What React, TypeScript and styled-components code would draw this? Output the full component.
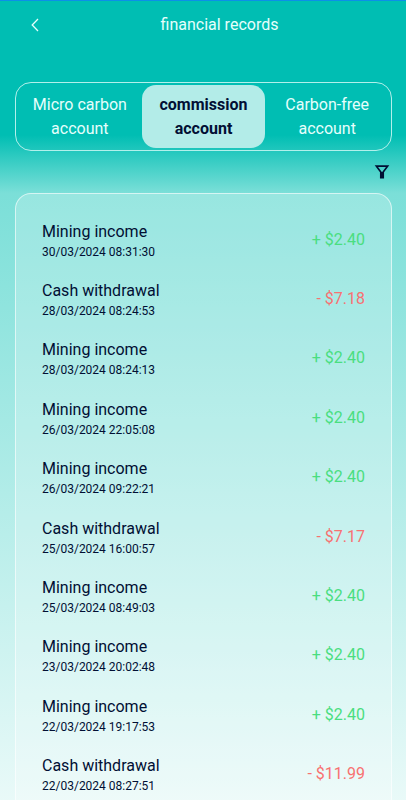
import React, { useState } from "react";
import styled, { createGlobalStyle } from "styled-components";

const GlobalStyle = createGlobalStyle`
  * { box-sizing: border-box; }
  body { margin: 0; font-family: Roboto, "Liberation Sans", sans-serif; color: #010f34; }
  button { font: inherit; color: inherit; background: none; border: 0; padding: 0; cursor: pointer; }
`;

const Page = styled.div`
  display: flex;
  flex-direction: column;
  height: 100vh;
  overflow-y: auto;
  scrollbar-width: none;
  padding: 0 14px 0 15px;
  border-top: 1px solid #0d8fe8;
  background: linear-gradient(180deg, #00beb3 0, #00beb3 134px, #7bdfd8 192px, #effbfa 832px);
`;

const Header = styled.header`
  display: flex;
  flex-shrink: 0;
  align-items: center;
  height: 48px;
  margin-bottom: 33px;
  color: #e6fffc;
`;

const BackButton = styled.button`
  display: flex;
  justify-content: flex-end;
  width: 28px;
`;

const Title = styled.h1`
  flex: 1;
  margin: 0;
  padding-left: 4px;
  font-size: 16px;
  font-weight: 400;
  line-height: 24px;
  text-align: center;
`;

const Tabs = styled.div`
  display: grid;
  flex-shrink: 0;
  grid-template-columns: repeat(3, 1fr);
  padding: 2px;
  border: 1px solid #b2f0eb;
  border-radius: 16px;
`;

const Tab = styled.button<{ $active: boolean }>`
  && {
    padding: 8px 4px 7px;
    border-radius: 14px;
    font-size: 16px;
    line-height: 24px;
    font-weight: ${(p) => (p.$active ? 700 : 400)};
    color: ${(p) => (p.$active ? "#010f34" : "#e6fffc")};
    background: ${(p) => (p.$active ? "#b3ece8" : "transparent")};
  }
`;

const Toolbar = styled.div`
  display: flex;
  flex-shrink: 0;
  align-items: center;
  justify-content: flex-end;
  height: 42px;
`;

const FilterButton = styled.button`
  display: flex;
`;

const Records = styled.ul`
  display: grid;
  flex-shrink: 0;
  grid-auto-rows: 1fr;
  min-height: 628px;
  margin: 0;
  padding: 16px 26px;
  list-style: none;
  border: 1px solid rgba(255, 255, 255, 0.6);
  border-radius: 16px;
  background: rgba(255, 255, 255, 0.22);
`;

const Row = styled.li`
  display: flex;
  align-items: center;
  justify-content: space-between;
`;

const Name = styled.div`
  font-size: 16px;
  line-height: 24px;
`;

const Time = styled.time`
  display: block;
  font-size: 12px;
  line-height: 16px;
`;

const Amount = styled.span<{ $positive: boolean }>`
  font-size: 16px;
  line-height: 24px;
  color: ${(p) => (p.$positive ? "#4ade80" : "#f87171")};
`;

const accounts = ["Micro carbon account", "commission account", "Carbon-free account"];

const records = [
  { time: "30/03/2024 08:31:30", amount: 2.4 },
  { time: "28/03/2024 08:24:53", amount: -7.18 },
  { time: "28/03/2024 08:24:13", amount: 2.4 },
  { time: "26/03/2024 22:05:08", amount: 2.4 },
  { time: "26/03/2024 09:22:21", amount: 2.4 },
  { time: "25/03/2024 16:00:57", amount: -7.17 },
  { time: "25/03/2024 08:49:03", amount: 2.4 },
  { time: "23/03/2024 20:02:48", amount: 2.4 },
  { time: "22/03/2024 19:17:53", amount: 2.4 },
  { time: "22/03/2024 08:27:51", amount: -11.99 },
];

export default function App() {
  const [active, setActive] = useState(1);
  return (
    <>
      <GlobalStyle />
      <Page>
        <Header>
          <BackButton aria-label="Back">
            <svg width="16" height="16" viewBox="0 0 16 16" fill="none" stroke="currentColor" strokeWidth="1.3">
              <path d="M11 2L5.2 8L11 14" />
            </svg>
          </BackButton>
          <Title>financial records</Title>
        </Header>
        <Tabs role="tablist">
          {accounts.map((name, i) => (
            <Tab key={name} role="tab" aria-selected={i === active} $active={i === active} onClick={() => setActive(i)}>
              {name}
            </Tab>
          ))}
        </Tabs>
        <Toolbar>
          <FilterButton aria-label="Filter">
            <svg width="18" height="18" viewBox="0 0 18 18" fill="none" stroke="#010f34" strokeWidth="1.7">
              <path d="M2.4 3.2H13.6L9.2 9V14.6H6.8V9Z" />
              <path d="M8 9V14.6" strokeWidth="2" />
            </svg>
          </FilterButton>
        </Toolbar>
        <Records>
          {records.map((r) => (
            <Row key={r.time}>
              <div>
                <Name>{r.amount > 0 ? "Mining income" : "Cash withdrawal"}</Name>
                <Time>{r.time}</Time>
              </div>
              <Amount $positive={r.amount > 0}>
                {`${r.amount > 0 ? "+" : "-"} $${Math.abs(r.amount).toFixed(2)}`}
              </Amount>
            </Row>
          ))}
        </Records>
      </Page>
    </>
  );
}
